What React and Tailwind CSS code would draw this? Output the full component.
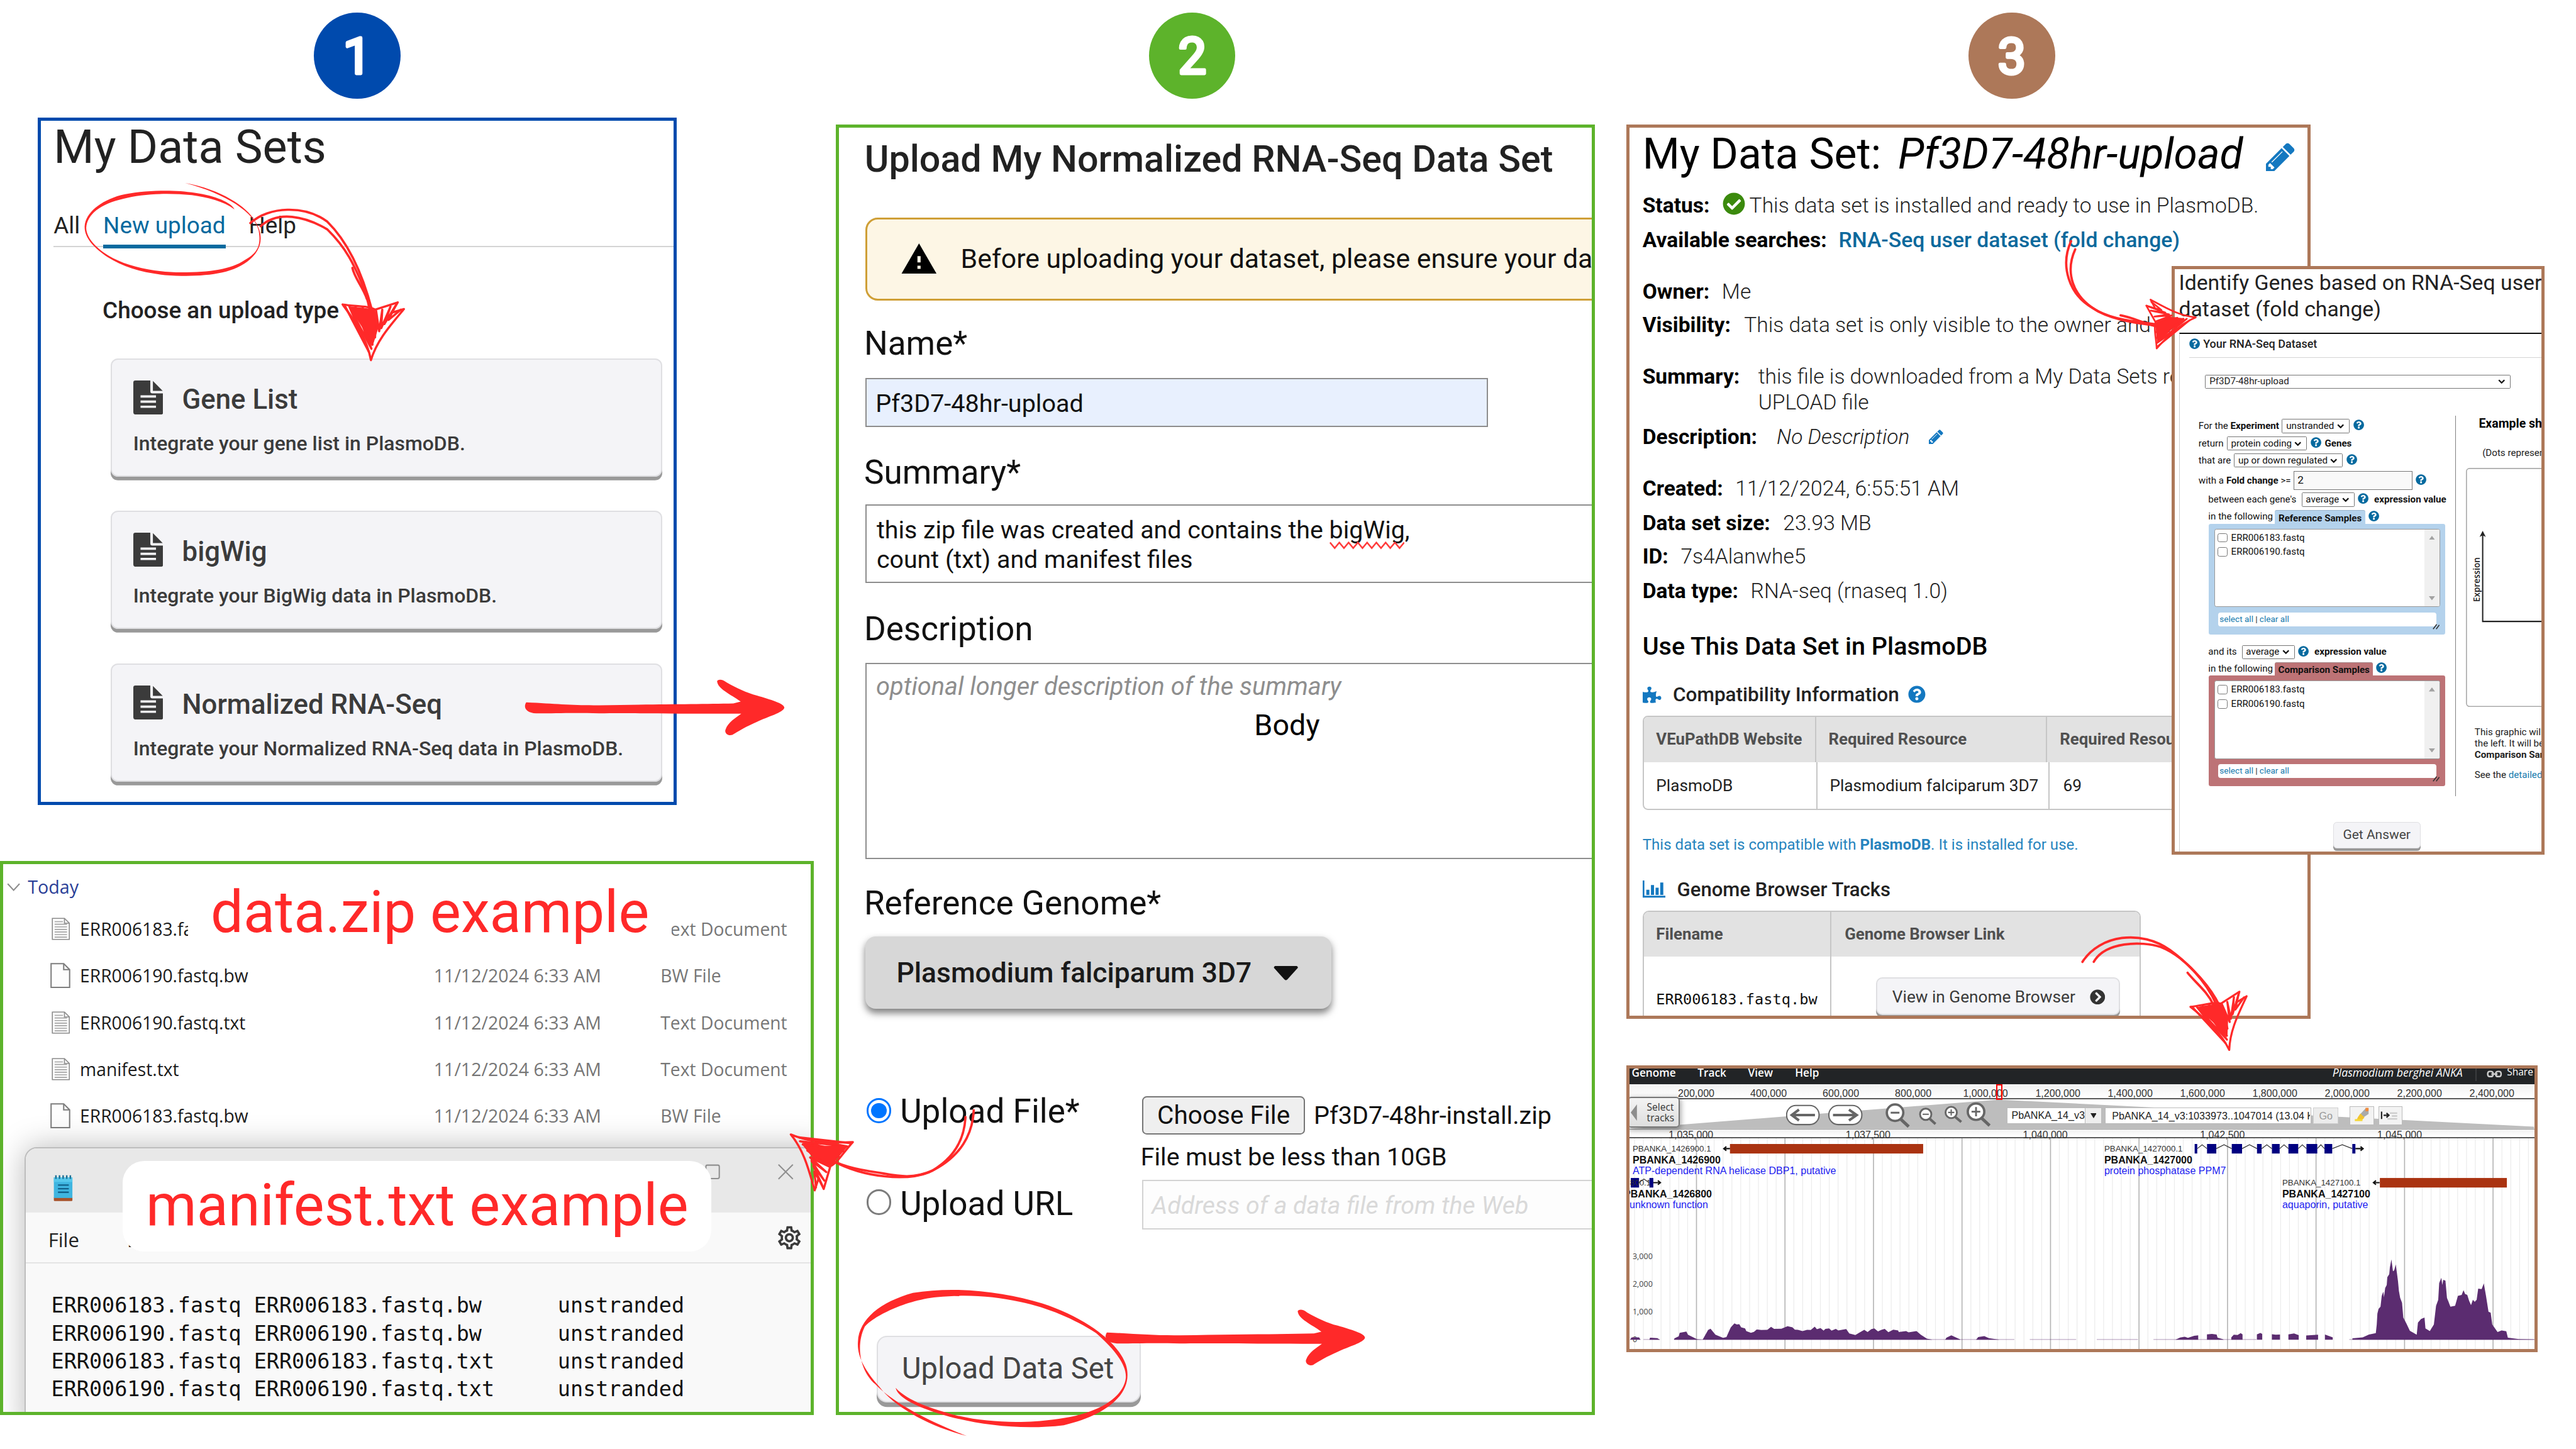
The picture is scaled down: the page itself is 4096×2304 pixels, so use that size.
import React from "react";
import {
  FaQuestionCircle,
  FaCheckCircle,
  FaPuzzlePiece,
  FaChevronCircleRight,
} from "react-icons/fa";
import { MdWarning, MdOutlineSettings } from "react-icons/md";

const RED = "#ff2929";

/* ---------- shared bits ---------- */

function Badge({ n, className }) {
  return (
    <div className={"absolute top-[24px] h-[168px] w-[168px] rounded-full " + className}>
      <svg viewBox="0 0 168 168" className="h-full w-full">
        <text
          x="84"
          y="118.500"
          textAnchor="middle"
          fontFamily="Roboto, sans-serif"
          fontSize="97"
          fontWeight="400"
          fill="#fff"
          stroke="#fff"
          strokeWidth="6"
          strokeLinejoin="round"
        >
          {n}
        </text>
      </svg>
    </div>
  );
}

function DocGlyph() {
  return (
    <svg viewBox="0 0 58 66" className="h-[66px] w-[58px] shrink-0">
      <path d="M4 0H33V21q0 4 4 4H58V62q0 4-4 4H4q-4 0-4-4V4q0-4 4-4z" fill="#3b3b3b" />
      <path d="M38 1L57 20H38z" fill="#3b3b3b" />
      <path d="M14 31H44M14 41H44M14 51H44" stroke="#f4f4f7" strokeWidth="4.5" />
    </svg>
  );
}

function Pencil({ className }) {
  return (
    <svg viewBox="0 128 1536 1536" className={"shrink-0 text-[#1478c0] " + className}>
      <path
        fill="currentColor"
        d="M363 1536l91-91-235-235-91 91v107h128v128h107zM886 608q0-22-22-22-10 0-17 7l-542 542q-7 7-7 17 0 22 22 22 10 0 17-7l542-542q7-7 7-17zM832 416l416 416-832 832h-416v-416zM1515 512q0 53-37 90l-166 166-416-416 166-165q36-38 90-38 53 0 91 38l235 234q37 39 37 91z"
      />
    </svg>
  );
}

function Help({ className = "" }) {
  return <FaQuestionCircle className={"h-[21px] w-[21px] shrink-0 text-[#066a9f] " + className} />;
}

/* ---------- panel 1 ---------- */

function UploadCard({ title, text }) {
  return (
    <div className="h-[229px] w-[1070px] rounded-[14px] border-[3px] border-[#dfdfe2] bg-[#f4f4f7] pl-[41px] pt-[40px] text-[#3b3b3b] shadow-[0_7px_0_#999]">
      <div className="flex h-[66px] items-center gap-[37px]">
        <DocGlyph />
        <span className="mt-[9px] text-[53.400px] font-medium leading-none">{title}</span>
      </div>
      <p className="mt-[38px] whitespace-nowrap text-[39px] font-medium leading-none">{text}</p>
    </div>
  );
}

function MyDataSets() {
  return (
    <section className="absolute left-[73px] top-[228px] h-[1335px] w-[1240px] overflow-hidden border-[6.2px] border-[#004aad] bg-white pl-[1px] pt-[2px] text-[#222]">
      <h1 className="ml-[24px] mt-[6px] text-[90px] leading-none">My Data Sets</h1>
      <nav className="ml-[24px] mt-[84px] flex gap-[45px] border-b-[3px] border-[#d4d4d4] text-[45px] leading-none">
        <span className="pb-[16px]">All</span>
        <span className="-mb-[5px] border-b-[7.400px] border-[#066a9f] pb-[14px] text-[#066a9f]">New upload</span>
        <span className="pb-[16px]">Help</span>
      </nav>
      <h2 className="ml-[119px] mt-[101px] text-[45px] font-medium leading-none">Choose an upload type</h2>
      <div className="ml-[135px] mt-[70px] flex flex-col gap-[67px]">
        <UploadCard title="Gene List" text="Integrate your gene list in PlasmoDB." />
        <UploadCard title="bigWig" text="Integrate your BigWig data in PlasmoDB." />
        <UploadCard title="Normalized RNA-Seq" text="Integrate your Normalized RNA-Seq data in PlasmoDB." />
      </div>
    </section>
  );
}

/* ---------- file explorer + notepad ---------- */

function TextDocIcon() {
  return (
    <svg viewBox="0 0 36 44" className="h-[44px] w-[36px]">
      <path d="M1.5 1.5H25L34.500 11V42.500H1.500z" fill="#fbfbfb" stroke="#8c8c8c" strokeWidth="2" />
      <path d="M6 8H22M6 13H30M6 18H30M6 23H30M6 28H30M6 33H30M6 38H30" stroke="#a5a5a5" strokeWidth="2" />
      <path d="M25 1.500V11H34.500" fill="none" stroke="#8c8c8c" strokeWidth="2" />
    </svg>
  );
}

function BlankDocIcon() {
  return (
    <svg viewBox="0 0 39 49" className="h-[49px] w-[39px]">
      <path d="M1.500 1.500H26L37.500 13V47.500H1.500z" fill="#fdfdfd" stroke="#7d7d7d" strokeWidth="2.500" />
      <path d="M26 1.500V13H37.500" fill="none" stroke="#7d7d7d" strokeWidth="2.500" />
    </svg>
  );
}

const FILES = [
  ["ERR006183.fastq.txt", "Text Document"],
  ["ERR006190.fastq.bw", "BW File"],
  ["ERR006190.fastq.txt", "Text Document"],
  ["manifest.txt", "Text Document"],
  ["ERR006183.fastq.bw", "BW File"],
];

function ZipExample() {
  return (
    <section className="absolute left-0 top-[1671px] h-[1075px] w-[1580px] overflow-hidden border-[6.2px] border-[#5db32b] bg-white font-['Open_Sans',sans-serif] text-[34.500px] leading-none">
      <div className="flex h-[81px] items-center pl-[7px] pt-[8px] text-[#2b3f97]">
        <svg viewBox="0 0 26 16" className="h-[16px] w-[26px]">
          <path d="M1.500 1.500L13 14L24.500 1.500" fill="none" stroke="#8d8d8d" strokeWidth="2.500" />
        </svg>
        <span className="ml-[15px] text-[35px]">Today</span>
      </div>
      {FILES.map(([name, kind]) => (
        <div key={name} className="flex h-[90.6px] items-center text-[#767676]">
          <span className={kind === "BW File" ? "ml-[92px] flex w-[57px]" : "ml-[94px] flex w-[55px]"}>
            {kind === "BW File" ? <BlankDocIcon /> : <TextDocIcon />}
          </span>
          <span className="w-[687px] text-[#1b1b1b]">{name}</span>
          <span className="w-[440px] text-[34.800px]">11/12/2024 6:33 AM</span>
          <span className="whitespace-nowrap">{kind}</span>
        </div>
      ))}
      <div className="absolute left-[359px] top-[7px] flex h-[176px] w-[939px] items-center justify-center whitespace-nowrap rounded-[42px] bg-white font-['Roboto',sans-serif] text-[112.400px] text-[#ff2929]">
        <span className="-mt-[1px]">data.zip example</span>
      </div>

      <div className="absolute left-[42px] top-[550px] h-[560px] w-[1560px] rounded-[24px] border-[2.500px] border-[#bdbdbd] bg-[#f9f9f9] shadow-[0_0_60px_rgba(0,0,0,0.28)]">
        <div className="flex h-[124px] rounded-t-[22px] bg-[#e8e8e8]">
          <svg viewBox="0 0 40 52" className="ml-[52px] mt-[51px] h-[52px] w-[40px]">
            <path d="M2 44H38V49q0 2-2 2H4q-2 0-2-2z" fill="#a8522b" />
            <rect x="2" y="5" width="36" height="40" fill="#3fb5e0" />
            <rect x="2" y="5" width="36" height="9" fill="#56c8ec" />
            <path d="M6 1V8M13 1V8M20 1V8M27 1V8M34 1V8" stroke="#1b6f95" strokeWidth="3" />
            <path d="M10 20H31M10 27H31M10 34H31" stroke="#11618a" strokeWidth="3" />
          </svg>
          <svg viewBox="0 0 200 32" className="ml-[1196px] mt-[30px] h-[32px] w-[200px]">
            <rect x="31" y="2" width="26" height="26" rx="3" fill="none" stroke="#8f8f8f" strokeWidth="2.500" />
          </svg>
        </div>
        <div className="flex h-[99px] items-center border-b-[2.500px] border-[#e4e4e4] pt-[10px] text-[38px] text-[#222]">
          <span className="ml-[43px] w-[153px]">File</span>
          <span>Edit</span>
          <MdOutlineSettings className="-mt-[8px] ml-auto mr-[46px] h-[54px] w-[54px] text-[#3b3b3b]" />
        </div>
        <pre className="ml-[49px] mt-[55px] font-['DejaVu_Sans_Mono',monospace] text-[40.83px] leading-[54.200px] text-[#111]">
          {"ERR006183.fastq ERR006183.fastq.bw      unstranded\nERR006190.fastq ERR006190.fastq.bw      unstranded\nERR006183.fastq ERR006183.fastq.txt     unstranded\nERR006190.fastq ERR006190.fastq.txt     unstranded"}
        </pre>
      </div>
      <svg viewBox="0 0 30 30" className="absolute left-[1504px] top-[583px] h-[30px] w-[30px]">
        <path d="M1 1L29 29M29 1L1 29" stroke="#8f8f8f" strokeWidth="2.500" />
      </svg>
      <div className="absolute left-[232px] top-[576px] flex h-[176px] w-[1143px] items-center justify-center whitespace-nowrap rounded-[42px] bg-white font-['Roboto',sans-serif] text-[112.400px] text-[#ff2929]">
        <span className="-mt-[1px]">manifest.txt example</span>
      </div>
    </section>
  );
}

/* ---------- panel 2 ---------- */

function FieldLabel({ children, className }) {
  return <h3 className={"-ml-[3px] text-[64.8px] leading-none " + className}>{children}</h3>;
}

function UploadForm() {
  return (
    <section className="absolute left-[1622px] top-[242px] h-[2504px] w-[1474px] overflow-hidden border-[6.2px] border-[#5db32b] bg-white pl-[52px] pt-[2px] text-[48px] leading-none text-[#111]">
      <h2 className="-ml-[2px] mt-[22px] whitespace-nowrap text-[72.300px] font-medium leading-none text-[#222]">
        Upload My Normalized RNA-Seq Data Set
      </h2>
      <div className="mt-[78px] flex h-[161px] w-[1700px] items-center rounded-[24px] border-[4px] border-[#cf9f36] bg-[#fdf6e5]">
        <MdWarning className="ml-[63px] h-[74px] w-[74px] text-black" />
        <span className="-mt-[2px] ml-[44px] whitespace-nowrap text-[52.200px]">
          Before uploading your dataset, please ensure your data
        </span>
      </div>

      <FieldLabel className="mt-[51px]">Name*</FieldLabel>
      <div className="mt-[34px] flex h-[96px] w-[1208px] items-center border-[3px] border-[#8d8d8d] bg-[#e8f0fe] pl-[17px] pt-[4px] text-[48.300px]">
        Pf3D7-48hr-upload
      </div>

      <FieldLabel className="mt-[56px]">Summary*</FieldLabel>
      <div className="mt-[29px] h-[153px] w-[1700px] border-[3px] border-[#8d8d8d] pl-[19px] pt-[20px] leading-[57px]">
        this zip file was created and contains the{" "}
        <span className="relative">
          bigWig
          <svg viewBox="0 0 146 16" className="absolute left-0 top-[50px] h-[16px] w-[146px]">
            <path
              d="M1 2L10 13L19 2L28 13L37 2L46 13L55 2L64 13L73 2L82 13L91 2L100 13L109 2L118 13L127 2L136 13L145 2"
              fill="none"
              stroke="#ff3b3b"
              strokeWidth="3"
            />
          </svg>
        </span>
        ,<br />
        count (txt) and manifest files
      </div>

      <FieldLabel className="mt-[57px]">Description</FieldLabel>
      <div className="relative mt-[33px] h-[381px] w-[1700px] border-[3px] border-[#8d8d8d] pl-[18px] pt-[16px] text-[48.600px] italic leading-[57px] text-[#8e8e8e]">
        optional longer description of the summary
        <span className="absolute left-[752px] top-[90px] text-[57px] not-italic leading-none text-black">Body</span>
      </div>

      <FieldLabel className="mt-[53px]">Reference Genome*</FieldLabel>
      <div className="mt-[32px] flex h-[141px] w-[904px] items-center rounded-[20px] bg-[#d7d7d7] pl-[60px] pt-[2px] text-[54.200px] font-medium text-[#1a1a1a] shadow-[0_8px_14px_rgba(0,0,0,0.5)]">
        Plasmodium falciparum 3D7
        <svg viewBox="0 0 48 28" className="ml-[42px] h-[28px] w-[48px]">
          <path d="M3 0H45q4 2 1 5L27 26q-3 3-6 0L2 5Q-1 2 3 0z" fill="#111" />
        </svg>
      </div>

      <div className="mt-[167px] flex">
        <div className="w-[537px] shrink-0 text-[64.8px]">
          <div className="flex items-center gap-[17px]">
            <span className="-mt-[4px] ml-[2px] flex h-[48px] w-[48px] items-center justify-center rounded-full border-[4px] border-[#0075ff]">
              <span className="h-[30px] w-[30px] rounded-full bg-[#0075ff]" />
            </span>
            Upload File*
          </div>
          <div className="mt-[114.5px] flex items-center gap-[17px]">
            <span className="-mt-[8px] ml-[2px] h-[50px] w-[48px] rounded-full border-[4px] border-[#7c7c7c]" />
            Upload URL
          </div>
        </div>
        <div className="pt-[2px]">
          <div className="flex h-[75px] items-center">
            <span className="flex h-[75px] w-[316px] items-center justify-center rounded-[9px] border-[3px] border-[#767676] bg-[#efefef] text-[49.500px]">
              Choose File
            </span>
            <span className="ml-[17px] text-[48.300px]">Pf3D7-48hr-install.zip</span>
          </div>
          <p className="-ml-[3px] mt-[20px]">File must be less than 10GB</p>
          <div className="mt-[20px] flex h-[96px] w-[1200px] items-center border-[3px] border-[#d3d3d3] bg-[#fdfdfd] pl-[16px] pt-[6px] italic text-[#d9d9d9]">
            Address of a data file from the Web
          </div>
        </div>
      </div>

      <div className="ml-[22px] mt-[206px] flex h-[130px] w-[512px] items-center rounded-[20px] border-[3px] border-[#dfdfe2] bg-[#f4f4f7] pl-[46px] text-[57.6px] text-[#444] shadow-[0_9px_0_#999]">
        Upload Data Set
      </div>
    </section>
  );
}

/* ---------- panel 3: dataset record ---------- */

function Prop({ label, children, className }) {
  return (
    <div className={"flex whitespace-nowrap text-[41px] font-light leading-none " + className}>
      <span className="font-bold text-black">{label}</span>
      {children}
    </div>
  );
}

function DatasetRecord() {
  return (
    <section className="absolute left-[3157px] top-[242px] h-[1736px] w-[1328px] overflow-hidden border-[6.2px] border-[#ad7859] bg-white pl-[25px] pt-[2px] text-[#222]">
      <div className="mt-[9px] flex h-[82px] items-center text-[82.600px] leading-none text-black">
        <span>My Data Set:</span>
        <span className="ml-[33px] italic">Pf3D7-48hr-upload</span>
        <Pencil className="ml-[45px] mt-[9px] h-[56px] w-[56px]" />
      </div>
      <Prop label="Status:" className="mt-[37px] gap-[25px]">
        <FaCheckCircle className="-mt-[4px] h-[44px] w-[44px] text-[#3b8a0d]" />
        <span className="-ml-[17px]">This data set is installed and ready to use in PlasmoDB.</span>
      </Prop>
      <Prop label="Available searches:" className="mt-[26px] gap-[23px]">
        <span className="text-[41.200px] font-medium text-[#0b699c]">RNA-Seq user dataset (fold change)</span>
      </Prop>
      <Prop label="Owner:" className="mt-[59px] gap-[24px]">Me</Prop>
      <Prop label="Visibility:" className="mt-[24px] gap-[26px]">This data set is only visible to the owner and shared users</Prop>
      <div className="mt-[54px] flex gap-[36px] whitespace-nowrap text-[41px] font-light leading-[50.5px]">
        <span className="font-bold text-black">Summary:</span>
        <span>
          this file is downloaded from a My Data Sets repository
          <br />
          UPLOAD file
        </span>
      </div>
      <Prop label="Description:" className="mt-[21px] gap-[38px]">
        <span className="italic">No Description</span>
        <Pencil className="mt-[7px] h-[28px] w-[28px]" />
      </Prop>
      <Prop label="Created:" className="mt-[59px] gap-[24px]">11/12/2024, 6:55:51 AM</Prop>
      <Prop label="Data set size:" className="mt-[26px] gap-[25px]">23.93 MB</Prop>
      <Prop label="ID:" className="mt-[24px] gap-[24px]">7s4Alanwhe5</Prop>
      <Prop label="Data type:" className="mt-[27px] gap-[24px]">RNA-seq (rnaseq 1.0)</Prop>

      <h2 className="mt-[62px] text-[48.300px] font-medium leading-none text-black">Use This Data Set in PlasmoDB</h2>

      <div className="mt-[50px] flex h-[39px] items-center text-[38.500px] font-medium leading-none">
        <FaPuzzlePiece className="ml-[1px] h-[36px] w-[36px] text-[#1478c0]" />
        <span className="ml-[22px]">Compatibility Information</span>
        <FaQuestionCircle className="ml-[18px] h-[34px] w-[34px] text-[#1478c0]" />
      </div>
      <div className="ml-[1px] mt-[22px] w-[1200px] overflow-hidden rounded-l-[10px] border-[3px] border-[#c6c6c6] text-[32px] leading-none">
        <div className="flex h-[87px] bg-[#e2e2e2] pt-[1px] font-bold text-[#505050]">
          <span className="-mt-[1px] flex w-[336px] items-center whitespace-nowrap border-r-[3px] border-[#c6c6c6] pl-[23px] text-[31.500px]">VEuPathDB Website</span>
          <span className="-mt-[1px] flex w-[451px] items-center border-r-[3px] border-[#c6c6c6] pl-[24px] text-[31.500px]">Required Resource</span>
          <span className="flex items-center whitespace-nowrap pl-[25px] text-[31.500px]">Required Resource Release</span>
        </div>
        <div className="flex h-[91px]">
          <span className="flex w-[336px] items-center border-r-[3px] border-[#c6c6c6] pl-[23px] pt-[1px]">PlasmoDB</span>
          <span className="flex w-[451px] items-center border-r-[3px] border-[#c6c6c6] pl-[24px] pt-[1px]">Plasmodium falciparum 3D7</span>
          <span className="flex items-center pl-[26px]">69</span>
        </div>
      </div>
      <p className="mt-[52px] text-[29.400px] leading-none text-[#2784be]">
        This data set is compatible with <b className="font-bold">PlasmoDB</b>. It is installed for use.
      </p>

      <div className="mt-[53px] flex h-[39px] items-center text-[38px] font-medium leading-none">
        <svg viewBox="0 0 44 34" className="ml-[1px] h-[34px] w-[44px] text-[#1478c0]">
          <path d="M1.500 0V31.500H44" fill="none" stroke="currentColor" strokeWidth="3.500" />
          <path d="M7 28V18H13V28zM16 28V9H22V28zM25 28V14H31V28zM34 28V4H40V28z" fill="currentColor" />
        </svg>
        <span className="ml-[22px]">Genome Browser Tracks</span>
      </div>
      <div className="ml-[1px] mt-[22px] w-[966px] overflow-hidden rounded-t-[12px] border-[3px] border-[#c6c6c6] text-[31.500px] leading-none">
        <div className="flex h-[87px] bg-[#e2e2e2] font-bold text-[#505050]">
          <span className="flex w-[363px] items-center border-r-[3px] border-[#c6c6c6] pl-[23px]">Filename</span>
          <span className="flex items-center pl-[26px]">Genome Browser Link</span>
        </div>
        <div className="flex h-[165px]">
          <span className="flex w-[363px] items-center border-r-[3px] border-[#c6c6c6] pl-[23px] pt-[2px] font-['DejaVu_Sans_Mono',monospace] text-[28.900px] text-[#111]">
            ERR006183.fastq.bw
          </span>
          <span className="ml-[87px] mt-[40px] flex h-[73px] w-[474px] items-center rounded-[12px] border-[2.500px] border-[#dfdfe2] bg-[#f4f4f7] pl-[29px] pt-[2px] text-[32px] text-[#3b3b3b] shadow-[0_5px_0_#999]">
            View in Genome Browser
            <FaChevronCircleRight className="ml-auto mr-[27px] h-[30px] w-[30px] text-[#333]" />
          </span>
        </div>
      </div>
    </section>
  );
}

/* ---------- panel 3: search form ---------- */

function Select({ children, className }) {
  return (
    <span className={"flex h-[27px] shrink-0 items-center justify-between rounded-[2px] border-[1.5px] border-[#767676] bg-white pl-[7px] pr-[9px] " + className}>
      {children}
      <svg viewBox="0 0 14 9" className="h-[9px] w-[14px]">
        <path d="M1.500 1.500L7 7L12.500 1.500" fill="none" stroke="#111" strokeWidth="2.800" />
      </svg>
    </span>
  );
}

function SampleBox({ className }) {
  return (
    <div className={"ml-[20px] h-[215px] w-[459px] rounded-[4px] pl-[11px] pt-[10px] " + className}>
      <div className="flex h-[152px] w-[438px] justify-between overflow-hidden rounded-[4px] border-[1.5px] border-[#999] bg-white">
        <div className="flex flex-col gap-[9px] pl-[5px] pt-[7px]">
          {["ERR006183.fastq", "ERR006190.fastq"].map((s) => (
            <span key={s} className="flex items-center gap-[7px]">
              <span className="h-[18px] w-[19px] rounded-[4px] border-[1.5px] border-[#777]" />
              {s}
            </span>
          ))}
        </div>
        <div className="flex w-[29px] flex-col items-center justify-between bg-[#f0f0f0] py-[12px]">
          <svg viewBox="0 0 12 8" className="h-[8px] w-[12px]"><path d="M0 8L6 0L12 8z" fill="#a2a2a2" /></svg>
          <svg viewBox="0 0 12 8" className="h-[8px] w-[12px]"><path d="M0 0L6 8L12 0z" fill="#a2a2a2" /></svg>
        </div>
      </div>
      <div className="flex items-start">
        <div className="ml-[7px] mt-[10px] flex h-[27px] w-[424px] shrink-0 items-center gap-[4px] rounded-[5px] bg-white pl-[3px] text-[16.600px] text-[#1579ad]">
          <span>select all</span><span className="text-[#222]">|</span><span>clear all</span>
        </div>
        <svg viewBox="0 0 14 11" className="-ml-[8px] mt-[33px] h-[11px] w-[14px] shrink-0">
          <path d="M1 10L8 1M7 10L13 2" stroke="#333" strokeWidth="2" />
        </svg>
      </div>
    </div>
  );
}

function SearchForm() {
  return (
    <section className="absolute left-[4215px] top-[516px] h-[1143px] w-[724px] overflow-hidden whitespace-nowrap border-[6.2px] border-[#ad7859] bg-white pt-[1px] text-[18.500px] leading-none text-[#222]">
      <h2 className="ml-[8px] mt-[1px] h-[103px] text-[41.200px] leading-[51px]">
        Identify Genes based on RNA-Seq user
        <br />
        dataset (fold change)
      </h2>
      <div className="ml-[9px] mt-[19px] h-[1020px] border-l-[1.5px] border-t-[2.500px] border-l-[#ccc] border-t-[#111]">
        <div className="ml-[18px] flex h-[46px] items-start border-b-[2px] border-[#d4d4d4] pt-[8px]">
          <Help />
          <span className="ml-[6px] text-[22px] font-medium">Your RNA-Seq Dataset</span>
        </div>
        <Select className="ml-[49px] mt-[33px] w-[593px]">Pf3D7-48hr-upload</Select>
        <div className="mt-[53px] flex h-[738px]">
          <div className="w-[535px] shrink-0 border-r-[1.5px] border-[#808080] pl-[36px] pt-[6px] text-[#111]">
            <div className="flex h-[27px] items-center">
              <span className="w-[162px]">For the <b>Experiment</b></span>
              <Select className="w-[131px]">unstranded</Select>
              <Help className="-mt-[4px] ml-[7px]" />
            </div>
            <div className="mt-[7px] flex h-[27px] items-center">
              <span className="w-[55px]">return</span>
              <Select className="w-[155px]">protein coding</Select>
              <Help className="-mt-[4px] ml-[8px]" />
              <b className="ml-[6px]">Genes</b>
            </div>
            <div className="mt-[6px] flex h-[27px] items-center">
              <span className="w-[69px]">that are</span>
              <Select className="w-[211px]">up or down regulated</Select>
              <Help className="-mt-[4px] ml-[7px]" />
            </div>
            <div className="mt-[7px] flex h-[36px] items-center">
              <span className="w-[185px] pt-[2px]">with a <b>Fold change</b> &gt;=</span>
              <span className="flex h-[36px] w-[230px] items-center border-[1.5px] border-[#767676] bg-[#f9f9f9] pl-[6px] text-[21px]">2</span>
              <Help className="-mt-[4px] ml-[6px]" />
            </div>
            <div className="mt-[6px] flex h-[27px] items-center pl-[19px]">
              <span className="w-[181px]">between each gene's</span>
              <Select className="w-[103px]">average</Select>
              <Help className="-mt-[4px] ml-[6px]" />
              <b className="ml-[11px]">expression value</b>
            </div>
            <div className="mt-[7px] flex h-[26px] items-center pl-[19px]">
              <span className="w-[129px]">in the following</span>
              <b className="flex h-[27px] w-[176px] items-center justify-center rounded-t-[4px] border-t-[1.5px] border-[#9ab4ca] bg-[#b4d2ec] pt-[4px]">Reference Samples</b>
              <Help className="-mt-[4px] ml-[6px]" />
            </div>
            <SampleBox className="bg-[#b4d2ec]" />
            <div className="mt-[21px] flex h-[27px] items-center pl-[19px]">
              <span className="w-[65px]">and its</span>
              <Select className="w-[103px]">average</Select>
              <Help className="-mt-[4px] ml-[6px]" />
              <b className="ml-[11px]">expression value</b>
            </div>
            <div className="mt-[6px] flex h-[26px] items-center pl-[19px]">
              <span className="w-[129px]">in the following</span>
              <b className="flex h-[27px] w-[191px] items-center justify-center rounded-t-[4px] border-t-[1.5px] border-[#a68a8b] bg-[#bd7376] pt-[4px]">Comparison Samples</b>
              <Help className="-mt-[4px] ml-[6px]" />
            </div>
            <SampleBox className="bg-[#bd7376]" />
          </div>
          <div className="shrink-0">
            <p className="ml-[45px] mt-[3px] text-[23.800px] font-bold text-black">Example showing</p>
            <p className="ml-[52px] mt-[36px]">(Dots represent</p>
            <svg viewBox="0 0 200 464" className="ml-[20px] mt-[19px] h-[464px] w-[200px]">
              <rect x="1" y="1" width="260" height="462" rx="6" fill="#fff" stroke="#aaa" strokeWidth="2" />
              <path d="M32.500 128V298H200" fill="none" stroke="#222" strokeWidth="2.500" />
              <path d="M26.500 134L32.500 122L38.500 134L32.500 131z" fill="#222" />
              <text transform="translate(27 260) rotate(-90)" fontFamily="Open Sans, sans-serif" fontWeight="600" fontSize="16.500" fill="#222">
                Expression
              </text>
            </svg>
            <p className="ml-[37px] mt-[38px] leading-[22px]">
              This graphic will
              <br />
              the left. It will be
              <br />
              <b>Comparison Samples</b>
            </p>
            <p className="ml-[37px] mt-[17px] leading-[22px]">
              See the <span className="text-[#1579ad]">detailed</span>
            </p>
          </div>
        </div>
        <div className="ml-[297px] mt-[50px] flex h-[51px] w-[170px] items-center justify-center rounded-[7px] border-[1.5px] border-[#dfdfe2] bg-[#f4f4f7] text-[25.600px] text-[#444] shadow-[0_5px_0_#999]">
          Get Answer
        </div>
      </div>
    </section>
  );
}

/* ---------- panel 3: genome browser ---------- */

const OVERVIEW = ["200,000", "400,000", "600,000", "800,000", "1,000,000", "1,200,000", "1,400,000", "1,600,000", "1,800,000", "2,000,000", "2,200,000", "2,400,000"];
const RULER = ["1,035,000", "1,037,500", "1,040,000", "1,042,500", "1,045,000"];
const EXONS = [[4260, 5], [4284, 18], [4332, 20], [4381, 9], [4410, 15], [4442, 19], [4477, 21], [4512, 15], [4566, 6]];

function Tracks() {
  const grid = [];
  for (let i = -7; i <= 95; i++) {
    const x = 3293 + i * 17.18;
    if (x > 3163 && x < 4919) {
      const major = ((i % 10) + 10) % 10 === 0;
      grid.push(<path key={i} d={`M${x} 2209V2619`} stroke={major ? "#b5b5b5" : "#ececec"} strokeWidth={major ? 2 : 1.5} />);
    }
  }
  return (
    <svg viewBox="3163 2209 1756 410" className="block h-[410px] w-[1756px]" fontFamily="Liberation Sans, Arial, sans-serif">
      {grid}
      <g fontSize="16.300" fill="#333">
        <text x="3169" y="2235">PBANKA_1426900.1</text>
        <text x="4084.500" y="2235">PBANKA_1427000.1</text>
        <text x="4430" y="2301">PBANKA_1427100.1</text>
      </g>
      <g fontSize="19.600" fontWeight="700" fill="#111">
        <text x="3169" y="2258">PBANKA_1426900</text>
        <text x="4084.500" y="2258">PBANKA_1427000</text>
        <text x="4430" y="2324">PBANKA_1427100</text>
        <text x="3152" y="2324">PBANKA_1426800</text>
      </g>
      <g fontSize="19.600" fill="#1c1cf0">
        <text x="3169" y="2278">ATP-dependent RNA helicase DBP1, putative</text>
        <text x="4084.500" y="2278">protein phosphatase PPM7</text>
        <text x="4430" y="2344">aquaporin, putative</text>
        <text x="3163" y="2344">unknown function</text>
      </g>
      <g fill="#aa3311">
        <rect x="3358" y="2220" width="375" height="18.500" />
        <rect x="4619.500" y="2286" width="246.500" height="18.500" />
      </g>
      <g fill="#000080">
        <rect x="3165.500" y="2286" width="16" height="18.500" />
        <rect x="3201.700" y="2286" width="7.500" height="18.500" />
        {EXONS.map(([x, w]) => <rect key={x} x={x} y="2220" width={w} height="18.500" />)}
      </g>
      <text x="3164" y="2301" fontSize="16.300" fill="#333">800.1</text>
      <g fill="none" stroke="#333" strokeWidth="1.500">
        {EXONS.slice(0, -1).map(([x, w], i) => {
          const a = x + w;
          const b = EXONS[i + 1][0];
          return <path key={x} d={`M${a} 2229L${(a + b) / 2} 2221.500L${b} 2229`} />;
        })}
        <path d="M3181 2295L3191 2288L3201 2295" />
      </g>
      <g fill="none" stroke="#111" strokeWidth="2.500">
        <path d="M3358 2229H3346M3351 2225L3346 2229L3351 2233M4619 2295H4607M4612 2291L4607 2295L4612 2299" />
        <path d="M4572 2229H4587M4582 2225L4587 2229L4582 2233M3209 2295H3223M3218 2291L3223 2295L3218 2299" />
      </g>
      <g fontFamily="Open Sans, sans-serif" fontSize="15.300" fill="#444">
        <text x="3169" y="2443.500">3,000</text>
        <text x="3169" y="2497.500">2,000</text>
        <text x="3169" y="2550.500">1,000</text>
        <text x="3169" y="2604">0</text>
      </g>
      <path d="M3190 2599.500H3222M3250 2599.500H3910M3940 2599.500H4030M4070 2599.500H4150M4180 2599.500H4380M4560 2599.500H4919" stroke="#5b2c70" strokeOpacity="0.6" />
      <g fill="#5b2c70">
        <path
          transform="translate(3140 2050) scale(.5931 .38265)"
          d="M40 1437L46 1425L70 1425L75 1437zM104 1437L106 1427L130 1429L138 1437zM184 1437L186 1430L200 1420L203 1402L225 1396L230 1412L260 1435L278 1437L296 1388L304 1381L320 1412L345 1428L356 1424L370 1375L382 1354L390 1360L398 1358L404 1374L417 1380L421 1393L436 1402L446 1397L455 1385L470 1388L490 1387L502 1372L512 1382L536 1381L556 1369L572 1374L580 1386L590 1387L605 1393L620 1387L632 1388L645 1371L652 1384L664 1378L674 1391L680 1382L692 1380L700 1391L714 1382L722 1390L748 1383L758 1405L778 1413L790 1402L807 1387L818 1398L830 1384L840 1380L852 1395L862 1388L874 1382L886 1399L902 1386L918 1390L920 1398L944 1393L952 1400L978 1393L992 1412L1012 1432L1030 1437zM1072 1437L1076 1427L1092 1415L1120 1435L1122 1437zM1173 1437L1180 1424L1200 1419L1215 1429L1250 1437z"
        />
        <path
          transform="translate(4050 2050) scale(.60587 .38265)"
          d="M285 1437L300 1426L315 1422L325 1428L345 1417L358 1415V1437zM386 1437V1410L402 1408L417 1411L420 1427L436 1434L440 1437zM464 1437V1425L472 1412L484 1413L494 1404L500 1410V1437zM546 1437V1410L557 1403L563 1408V1437zM594 1437V1409L606 1412L620 1411V1437zM647 1437V1410L665 1405L680 1414V1437zM704 1437V1416L742 1412V1437zM764 1437V1411L789 1425V1437zM852 1437V1430L885 1425L905 1411L927 1404L930 1360L932 1305L936 1280L942 1270L946 1215L951 1193L953 1222L957 1175L962 1160L964 1120L970 1105L972 1070L977 1030L982 1090L986 1085L991 1055L998 1140L1001 1190L1005 1225L1011 1250L1015 1325L1025 1355L1036 1392L1058 1412L1062 1350L1072 1332L1083 1325L1086 1380L1100 1393L1113 1360L1120 1265L1127 1235L1130 1150L1137 1123L1140 1160L1143 1133L1150 1137L1155 1225L1166 1270L1181 1265L1190 1215L1202 1210L1208 1186L1213 1205L1220 1210L1226 1240L1232 1262L1238 1235L1244 1245L1250 1235L1255 1178L1266 1180L1273 1152L1280 1215L1288 1295L1295 1300L1300 1360L1317 1398L1330 1390L1345 1394L1350 1427L1385 1434L1436 1436V1437z"
        />
      </g>
    </svg>
  );
}

function GenomeBrowser() {
  return (
    <section className="absolute left-[3157px] top-[2068px] h-[557px] w-[1768px] overflow-hidden border-[6.2px] border-[#ad7859] bg-white">
      <div className="flex h-[31px] overflow-hidden whitespace-nowrap bg-[#222426] pl-[4px] font-['Open_Sans',sans-serif] text-[21px] font-semibold leading-none text-white">
        <span className="-mt-[2px] w-[128px]">Genome</span>
        <span className="-mt-[2px] w-[98px]">Track</span>
        <span className="-mt-[2px] w-[91px]">View</span>
        <span className="-mt-[2px]">Help</span>
        <span className="-mt-[2px] ml-auto text-[21.500px] font-medium italic">Plasmodium berghei ANKA</span>
        <span className="ml-[25px] h-[24px] w-[2px] bg-[#3a3c3e]" />
        <svg viewBox="0 0 30 14" className="ml-[20px] mt-[4px] h-[14px] w-[30px]" fill="none" stroke="#cfcfcf" strokeWidth="3">
          <path d="M12.500 5.500Q12 2 8 2H6Q2 2 2 7T6 12H8Q12 12 12.500 8.500M17.500 5.500Q18 2 22 2H24Q28 2 28 7T24 12H22Q18 12 17.500 8.500M9 7H21" />
        </svg>
        <span className="-mt-[3px] ml-[9px] mr-[2px] text-[19px] font-medium">Share</span>
      </div>
      <div className="relative flex h-[29px] border-b-[2.500px] border-[#5a5a5a] bg-linear-to-b from-[#f1f1f1] to-white pl-[59px] font-['Liberation_Sans',Arial,sans-serif] text-[19.600px] leading-[35px] text-[#333]">
        {OVERVIEW.map((t) => (
          <span key={t} className="w-[140.4px] shrink-0 text-center">{t}</span>
        ))}
        <span className="absolute left-[712px] top-0 h-[30px] w-[12px] border-[3px] border-[#ff0000]" />
      </div>
      <div className="relative flex h-[57px] items-center font-['Liberation_Sans',Arial,sans-serif] text-[19.700px] leading-none">
        <svg viewBox="0 0 1756 57" className="absolute inset-0 h-[57px] w-[1756px]">
          <path d="M0 57L712 1H724L1756 53V57z" fill="#bdbdbd" />
        </svg>
        <div className="absolute -left-[4px] -top-[5px] flex h-[60px] w-[102px] items-center rounded-[7px] border-[2.500px] border-[#777] bg-linear-to-b from-[#f4f4f4] to-[#dedede] font-['Open_Sans',sans-serif] text-[19px] leading-[21px] text-[#333] shadow-[2px_3px_10px_rgba(0,0,0,0.35)]">
          <svg viewBox="0 0 12 32" className="ml-[4px] h-[32px] w-[12px]"><path d="M12 0V32L0 16z" fill="#8d8d8d" /></svg>
          <span className="ml-[19px]">Select<br />tracks</span>
        </div>
        <svg viewBox="0 0 404 57" className="relative ml-[304px] h-[57px] w-[404px] shrink-0" fill="none" stroke="#666">
          <rect x="1" y="12" width="63" height="37" rx="18" fill="#fff" strokeWidth="2.500" />
          <rect x="83" y="12" width="64" height="37" rx="18" fill="#fff" strokeWidth="2.500" />
          <path d="M56 30.500H12M25 20L11 30.500L25 41" strokeWidth="5" />
          <path d="M91 30.500H135M122 20L137 30.500L122 41" strokeWidth="5" />
          <g fill="#fff">
            <path d="M222 38L238 53" strokeWidth="6" />
            <circle cx="211.500" cy="26" r="16" strokeWidth="4.500" />
            <path d="M278 37L290 48" strokeWidth="5" />
            <circle cx="271" cy="29" r="11" strokeWidth="3.500" />
            <path d="M327 33L340 44" strokeWidth="5" />
            <circle cx="320.500" cy="25.500" r="11" strokeWidth="3.500" />
            <path d="M379 36L395 51" strokeWidth="6" />
            <circle cx="368.700" cy="24" r="16" strokeWidth="4.500" />
          </g>
          <path d="M203 26H220M360 24H377M368.700 15V33" strokeWidth="3.500" />
          <path d="M265 29H277M314.500 25.500H326.500M320.500 19.500V31.500" strokeWidth="2.500" />
        </svg>
        <div className="relative ml-[24px] mt-[5px] flex h-[32px] w-[185px] shrink-0 items-center border-[1.500px] border-[#bbb] bg-white pl-[8px] text-[#222]">
          <span className="w-[142px] overflow-hidden leading-[28px]">PbANKA_14_v3</span>
          <span className="flex h-full flex-1 items-center justify-center border-l-[1.500px] border-[#bbb] bg-[#eee]">
            <svg viewBox="0 0 12 10" className="h-[10px] w-[12px]"><path d="M0 0H12L6 10z" fill="#222" /></svg>
          </span>
        </div>
        <div className="relative ml-[6px] mt-[5px] h-[32px] w-[400px] shrink-0 overflow-hidden whitespace-nowrap border-[1.500px] border-[#bbb] bg-white pl-[12px] pr-[2px] text-[#222]">
          <span className="block w-[384px] overflow-hidden leading-[30px]">PbANKA_14_v3:1033973..1047014 (13.04 Kb)</span>
        </div>
        <div className="relative ml-[4px] mt-[5px] flex h-[32px] w-[49px] shrink-0 items-center justify-center border-[1.500px] border-[#d0d0d0] bg-[#ececec] text-[#999]">Go</div>
        <div className="relative ml-[21px] mt-[6px] h-[36px] w-[48px] shrink-0 border-[1.500px] border-[#bbb] bg-[#f3f3f3]">
          <svg viewBox="0 0 46 34" className="h-full w-full">
            <path d="M30 3H36V14L24 22L18 16z" fill="#aaa" />
            <path d="M30 2H36V8L30 9z" fill="#f08a3c" />
            <path d="M20 13L28 21L22 27H12L15 20z" fill="#f2c430" />
            <path d="M9 24H24V28H9z" fill="#f5d838" />
          </svg>
        </div>
        <div className="relative ml-[9px] mt-[6px] h-[36px] w-[46px] shrink-0 border-[1.500px] border-[#bbb] bg-[#f3f3f3]">
          <svg viewBox="0 0 46 34" className="h-full w-full" fill="none">
            <path d="M22 12H37M26 18H37M17 24H37" stroke="#ccc" strokeWidth="3" />
            <path d="M5 9V24M9 16.500H19M15 12L20 16.500L15 21" stroke="#222" strokeWidth="2.800" />
          </svg>
        </div>
      </div>
      <div className="flex h-[18px] border-b-[2.500px] border-t-[1.500px] border-b-[#5a5a5a] border-t-[#9a9a9a] bg-linear-to-b from-[#f1f1f1] to-white font-['Liberation_Sans',Arial,sans-serif] text-[19.500px] leading-[22px] text-[#333]">
        <span className="-ml-[53px]" />
        {RULER.map((t) => (
          <span key={t} className="w-[343.9px] shrink-0 text-center">{t}</span>
        ))}
      </div>
      <Tracks />
    </section>
  );
}

/* ---------- hand drawn annotations ---------- */

function Head({ transform }) {
  return (
    <g transform={transform} fill="none" stroke={RED} strokeWidth="4.200" strokeLinejoin="round" strokeLinecap="round">
      <path d="M-55 -108C-30 -104 -5 -106 8 -98L52 -112L40 -92L64 -99C40 -70 12 -40 0 0C-8 -40 -28 -72 -55 -108" />
      <path d="M-50 -104L-4 -16L-42 -104L1 -22L-30 -103L3 -30L-16 -102L4 -38L0 -98L8 -44L10 -96L16 -56L22 -98L20 -62L38 -104L26 -70L48 -106L34 -78L58 -98" />
      <path d="M-40 -102L6 -97L12 -62L2 -30L-12 -60z" fill={RED} />
    </g>
  );
}

const ARROW =
  "M1001 1006C1060 1012 1090 1018 1140 1017C1250 1013 1330 1013 1395 1010L1409 1003C1390 975 1365 955 1364 925C1367 916 1375 919 1382 930C1400 950 1420 970 1440 980C1465 995 1492 1010 1492 1026C1490 1045 1460 1060 1440 1080C1420 1097 1405 1115 1393 1130C1383 1135 1378 1120 1380 1110C1385 1080 1400 1065 1410 1049C1300 1050 1200 1046 1140 1048C1090 1045 1060 1048 1020 1048C1000 1045 995 1025 1001 1006Z";

function Annotations() {
  return (
    <svg viewBox="0 0 5000 2812" className="pointer-events-none absolute left-0 top-0 h-[2812px] w-[5000px]">
      <g fill={RED}>
        <path
          transform="scale(1.0204 .574)"
          d="M352 619C420 640 470 700 484 745C505 800 497 850 470 885C440 925 395 933 345 933C290 932 240 910 205 870C180 840 160 805 161 765C163 720 190 680 230 660C270 643 330 640 370 652C410 662 440 685 446 708C425 680 395 668 365 660C320 652 270 655 235 672C190 690 166 725 164 770C164 810 190 850 215 873C250 905 300 921 345 921C400 921 440 910 465 880C490 855 497 830 492 780C485 720 430 655 352 619Z"
        />
        <path
          transform="translate(1500 1950) scale(1.0459 .5497)"
          d="M360 1523C290 1490 225 1420 198 1350C170 1290 156 1240 158 1190C160 1110 200 1050 260 1018C340 992 430 1015 500 1055C580 1105 640 1190 655 1270C672 1370 620 1450 540 1485C440 1508 340 1470 280 1425C240 1395 230 1370 228 1353C250 1400 300 1430 340 1450C400 1478 470 1478 520 1465C600 1450 650 1390 655 1320C658 1270 630 1210 600 1160C560 1110 510 1070 460 1050C410 1030 360 1022 305 1033C240 1045 180 1110 170 1140C155 1200 160 1290 190 1340C225 1410 300 1480 360 1523Z"
        />
        <path transform="translate(0 850) scale(1.0204 .5102)" d={ARROW} />
        <path transform="translate(1127 2073) scale(1.0204 .5102)" d={ARROW} />
      </g>
      <g fill="none" stroke={RED} strokeWidth="4.500" strokeLinecap="round">
        <path d="M486 433C522 400 592 398 635 430C682 476 708 548 722 602" />
        <path d="M506 439C540 408 592 420 635 445C673 482 688 516 704 554C714 580 718 600 720 618" />
        <path d="M684 520C688 540 704 556 712 580" />
        <path d="M1890 2155C1888 2200 1866 2246 1804 2275C1762 2292 1680 2288 1614 2252" />
        <path d="M1874 2168C1872 2208 1854 2246 1810 2272C1770 2290 1740 2282 1705 2276C1660 2270 1628 2262 1600 2244" />
        <path d="M4020 468C3998 516 4016 572 4062 598C4098 622 4150 628 4205 634" />
        <path d="M4028 484C4008 528 4022 576 4072 604C4104 620 4140 624 4190 630" />
        <path d="M4116 612C4140 616 4160 628 4195 636" />
        <path d="M4042 1867C4076 1814 4156 1804 4212 1844C4256 1876 4292 1918 4308 1952" />
        <path d="M4064 1867C4086 1828 4156 1826 4194 1838C4240 1856 4284 1908 4302 1950" />
        <path d="M4246 1888C4262 1908 4284 1924 4296 1950" />
      </g>
      <Head transform="translate(720 699)" />
      <Head transform="translate(1535 2202) rotate(124)" />
      <Head transform="translate(4262 616) rotate(-101.500) scale(.8)" />
      <Head transform="translate(4327 2038) rotate(-15) scale(.93)" />
    </svg>
  );
}

export default function App() {
  return (
    <div className="h-[2304px] w-[4096px] overflow-hidden bg-white">
      <main className="relative h-[2812px] w-[5000px] bg-white font-['Roboto',sans-serif] [zoom:0.8192]">
        <Badge n="1" className="left-[609px] bg-[#004aad]" />
        <Badge n="2" className="left-[2230px] bg-[#5db32b]" />
        <Badge n="3" className="left-[3821px] bg-[#ad7859]" />
        <MyDataSets />
        <ZipExample />
        <UploadForm />
        <DatasetRecord />
        <SearchForm />
        <GenomeBrowser />
        <Annotations />
      </main>
    </div>
  );
}
